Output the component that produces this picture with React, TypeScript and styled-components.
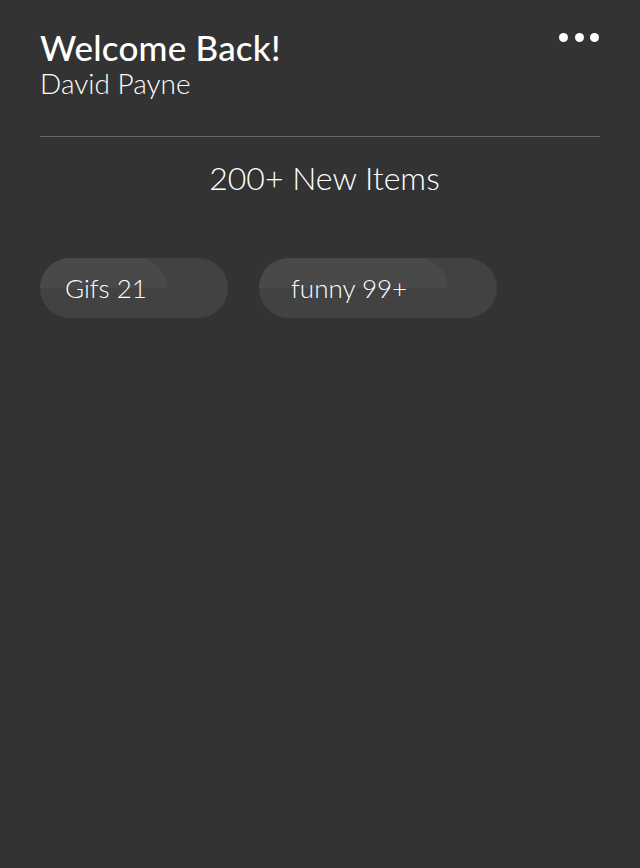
import React from "react";
import styled, { createGlobalStyle } from "styled-components";

const Global = createGlobalStyle`
  html, body { margin: 0; padding: 0; background: #333333; }
  body { font-family: Lato, "Open Sans", sans-serif; color: #ffffff; }
`;

const Page = styled.div`
  min-height: 868px;
  padding: 27px 40px 0 40px;
  box-sizing: border-box;
  background: #333333;
`;

const Header = styled.header`
  display: flex;
  justify-content: space-between;
  align-items: flex-start;
  padding-bottom: 37px;
  border-bottom: 1px solid #666666;
`;

const Titles = styled.div`
  display: flex;
  flex-direction: column;
`;

const Title = styled.h1`
  margin: 0;
  font-size: 35px;
  font-weight: 500;
  line-height: 40px;
  letter-spacing: 0.2px;
`;

const Subtitle = styled.div`
  font-size: 28px;
  font-weight: 300;
  line-height: 32px;
`;

const Menu = styled.button`
  display: flex;
  gap: 6.5px;
  padding: 6px 1px 0 0;
  border: none;
  background: none;
  cursor: pointer;
`;

const Dot = styled.span`
  width: 9px;
  height: 9px;
  border-radius: 50%;
  background: #ffffff;
`;

const Count = styled.div`
  text-align: center;
  font-size: 32px;
  font-weight: 300;
  line-height: 40px;
  margin-top: 21px;
  padding-left: 9px;
`;

const Tags = styled.div`
  display: flex;
  gap: 31px;
  margin-top: 60px;
`;

const Tag = styled.div<{ $w: number; $pl: number; $hl: number }>`
  position: relative;
  overflow: hidden;
  width: ${(p) => p.$w}px;
  height: 60px;
  box-sizing: border-box;
  padding-left: ${(p) => p.$pl}px;
  border-radius: 30px;
  background: #424242;
  display: flex;
  align-items: center;
  font-size: 26px;
  font-weight: 300;
  &::before {
    content: "";
    position: absolute;
    left: 0;
    top: 0;
    width: ${(p) => p.$hl}px;
    height: 30px;
    background: #494949;
    border-top-right-radius: 30px;
  }
`;

const TagLabel = styled.span`
  position: relative;
`;

export default function App() {
  return (
    <>
      <Global />
      <Page>
        <Header>
          <Titles>
            <Title>Welcome Back!</Title>
            <Subtitle>David Payne</Subtitle>
          </Titles>
          <Menu aria-label="More">
            <Dot />
            <Dot />
            <Dot />
          </Menu>
        </Header>
        <Count>200+ New Items</Count>
        <Tags>
          <Tag $w={188} $pl={25} $hl={127}>
            <TagLabel>Gifs 21</TagLabel>
          </Tag>
          <Tag $w={238} $pl={32} $hl={189}>
            <TagLabel>funny 99+</TagLabel>
          </Tag>
        </Tags>
      </Page>
    </>
  );
}
